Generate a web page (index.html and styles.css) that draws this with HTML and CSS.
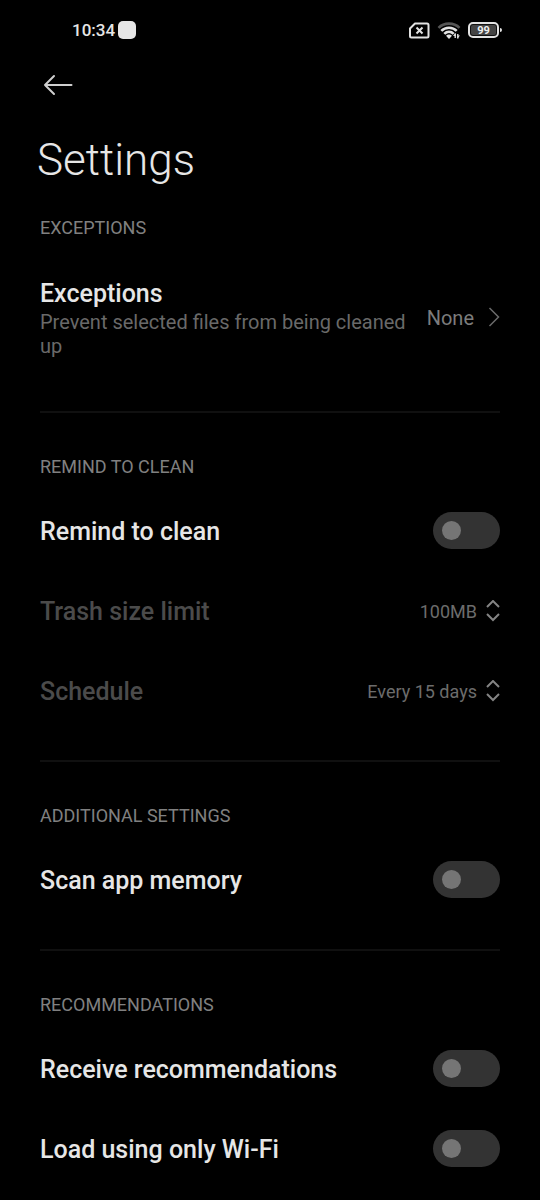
FILE: index.html
```html
<!DOCTYPE html>
<html lang="en">
<head>
<meta charset="utf-8">
<meta name="viewport" content="width=device-width, initial-scale=1">
<title>Settings</title>
<link rel="stylesheet" href="styles.css">
</head>
<body>
<div class="status">
  <div class="status-left"><span class="clock">10:34</span><span class="notice"></span></div>
  <div class="status-right">
    <svg width="22" height="18" viewBox="0 0 22 18" fill="none" stroke="#e2e2e2" stroke-width="2" stroke-linejoin="round">
      <path d="M7 2.500H19a1.500 1.500 0 0 1 1.500 1.500v11a1.500 1.500 0 0 1-1.500 1.500H3.500A1.500 1.500 0 0 1 2 15V7.500Z"/>
      <path d="M8.500 6.500l6 6M14.500 6.500l-6 6"/>
    </svg>
    <svg width="24" height="18" viewBox="0 0 24 18" fill="none" stroke="#e2e2e2" stroke-width="2.600">
      <path d="M1.500 6.800C7 1.200 17 1.200 22.500 6.800" stroke="#555"/>
      <path d="M4.300 9.900C8.500 5.600 15.500 5.600 19.700 9.900"/>
      <path d="M7.300 12.900C10 10.200 14 10.200 16.700 12.900"/>
      <path d="M9 14.800Q12 12.300 15 14.800L12 18Z" fill="#e2e2e2" stroke="none"/>
      <path d="M18.200 12.500v4.500M20.800 13v4.500" stroke-width="1.400"/>
      <path d="M16 15l2.500-3v3ZM23 14.500l-2.500 3v-3Z" fill="#e2e2e2" stroke="none"/>
    </svg>
    <svg width="34" height="18" viewBox="0 0 34 18" role="img" aria-label="Battery 99 percent">
      <rect x="1" y="2" width="29" height="14" rx="4" fill="#111" stroke="#e2e2e2" stroke-width="2"/>
      <rect x="3" y="4" width="25" height="10" rx="2" fill="#444"/>
      <path d="M32 7q2 0 2 2t-2 2Z" fill="#e2e2e2"/>
      <text class="battery-text" x="15.500" y="13" text-anchor="middle">99</text>
    </svg>
  </div>
</div>
<header class="header">
  <button class="back" type="button" aria-label="Back">
    <svg width="30" height="22" viewBox="0 0 30 22" fill="none" stroke="#cfcfcf" stroke-width="2" stroke-linecap="round" stroke-linejoin="round"><path d="M28.500 11H2M11 2l-9 9 9 9"/></svg>
  </button>
  <h1 class="title">Settings</h1>
</header>
<main class="main">
  <section class="section">
    <h2 class="heading">EXCEPTIONS</h2>
    <button class="row row-tall" type="button">
      <span class="text"><span class="name">Exceptions</span><span class="summary">Prevent selected files from being cleaned up</span></span>
      <span class="value">None</span>
      <svg class="chevron" width="12" height="20" viewBox="0 0 12 20" fill="none" stroke="#6a6a6a" stroke-width="1.500"><path d="M1.500 1l9 9-9 9"/></svg>
    </button>
  </section>
  <section class="section">
    <h2 class="heading">REMIND TO CLEAN</h2>
    <label class="row"><span class="name">Remind to clean</span><input class="switch" type="checkbox" role="switch"></label>
    <div class="row">
      <label class="name name-off" for="limit">Trash size limit</label>
      <span class="picker"><select class="select" id="limit" disabled><option>100MB</option></select>
      <svg width="14" height="22" viewBox="0 0 14 22" fill="none" stroke="#848484" stroke-width="2"><path d="M1 7l6-6 6 6M1 14l6 6 6-6"/></svg></span>
    </div>
    <div class="row">
      <label class="name name-off" for="schedule">Schedule</label>
      <span class="picker"><select class="select" id="schedule" disabled><option>Every 15 days</option></select>
      <svg width="14" height="22" viewBox="0 0 14 22" fill="none" stroke="#848484" stroke-width="2"><path d="M1 7l6-6 6 6M1 14l6 6 6-6"/></svg></span>
    </div>
  </section>
  <section class="section">
    <h2 class="heading">ADDITIONAL SETTINGS</h2>
    <label class="row"><span class="name">Scan app memory</span><input class="switch" type="checkbox" role="switch"></label>
  </section>
  <section class="section">
    <h2 class="heading">RECOMMENDATIONS</h2>
    <label class="row"><span class="name">Receive recommendations</span><input class="switch" type="checkbox" role="switch"></label>
    <label class="row"><span class="name">Load using only Wi-Fi</span><input class="switch" type="checkbox" role="switch"></label>
  </section>
</main>
</body>
</html>
```
FILE: styles.css
```css
* { box-sizing: border-box; }
body {
  margin: 0;
  background: #000;
  color: #e6e6e6;
  font-family: Roboto, "Liberation Sans", sans-serif;
}
button, select { font-family: inherit; background: none; border: 0; padding: 0; color: inherit; }
svg { display: block; flex: none; }
.status {
  display: flex;
  justify-content: space-between;
  align-items: center;
  height: 60px;
  padding: 0 38px 0 72px;
}
.status-left { display: flex; align-items: center; gap: 3px; }
.clock { font-size: 17px; font-weight: 500; line-height: 20px; }
.notice { width: 18px; height: 18px; border-radius: 5px; background: #e6e6e6; }
.status-right { display: flex; align-items: center; gap: 7px; }
.battery-text { font-size: 11px; font-weight: 700; fill: #f0f0f0; }
.header { padding: 14px 37px 0; }
.back { display: block; padding: 0 6px; }
.title { margin: 36px 0 0; font-size: 44px; font-weight: 300; line-height: 56px; }
.main { padding: 0 40px; }
.section { padding: 42px 0 29px; }
.section:first-child { padding-top: 28px; }
.section + .section { border-top: 2px solid #101010; }
.heading { margin: 0 0 12px; font-size: 18px; font-weight: 400; line-height: 24px; color: #808080; }
.row {
  display: flex;
  align-items: center;
  justify-content: space-between;
  width: 100%;
  min-height: 80px;
  text-align: left;
}
.row-tall { padding: 24px 0; }
.text { flex: 1; }
.name { display: block; padding-top: 2px; font-size: 25px; font-weight: 500; line-height: 32px; }
.name-off { color: #4b4b4b; }
.summary { display: block; font-size: 20px; line-height: 24px; color: #696969; }
.value { margin-left: 20px; padding-top: 2px; font-size: 20px; line-height: 24px; color: #7c7c7c; }
.chevron { margin-left: 14px; }
.picker { display: flex; align-items: center; gap: 9px; }
.select { appearance: none; padding-top: 1px; font-size: 18px; line-height: 24px; color: #6c6c6c; opacity: 1; text-align-last: right; }
.switch {
  appearance: none;
  flex: none;
  display: flex;
  align-items: center;
  width: 67px;
  height: 37px;
  margin: 0 0 1px;
  padding: 0 9px;
  border-radius: 19px;
  background: #333;
}
.switch::before { content: ""; width: 19px; height: 19px; border-radius: 50%; background: #757575; }
.switch:checked { justify-content: flex-end; background: #0d6fd8; }
.switch:checked::before { background: #fff; }
```
